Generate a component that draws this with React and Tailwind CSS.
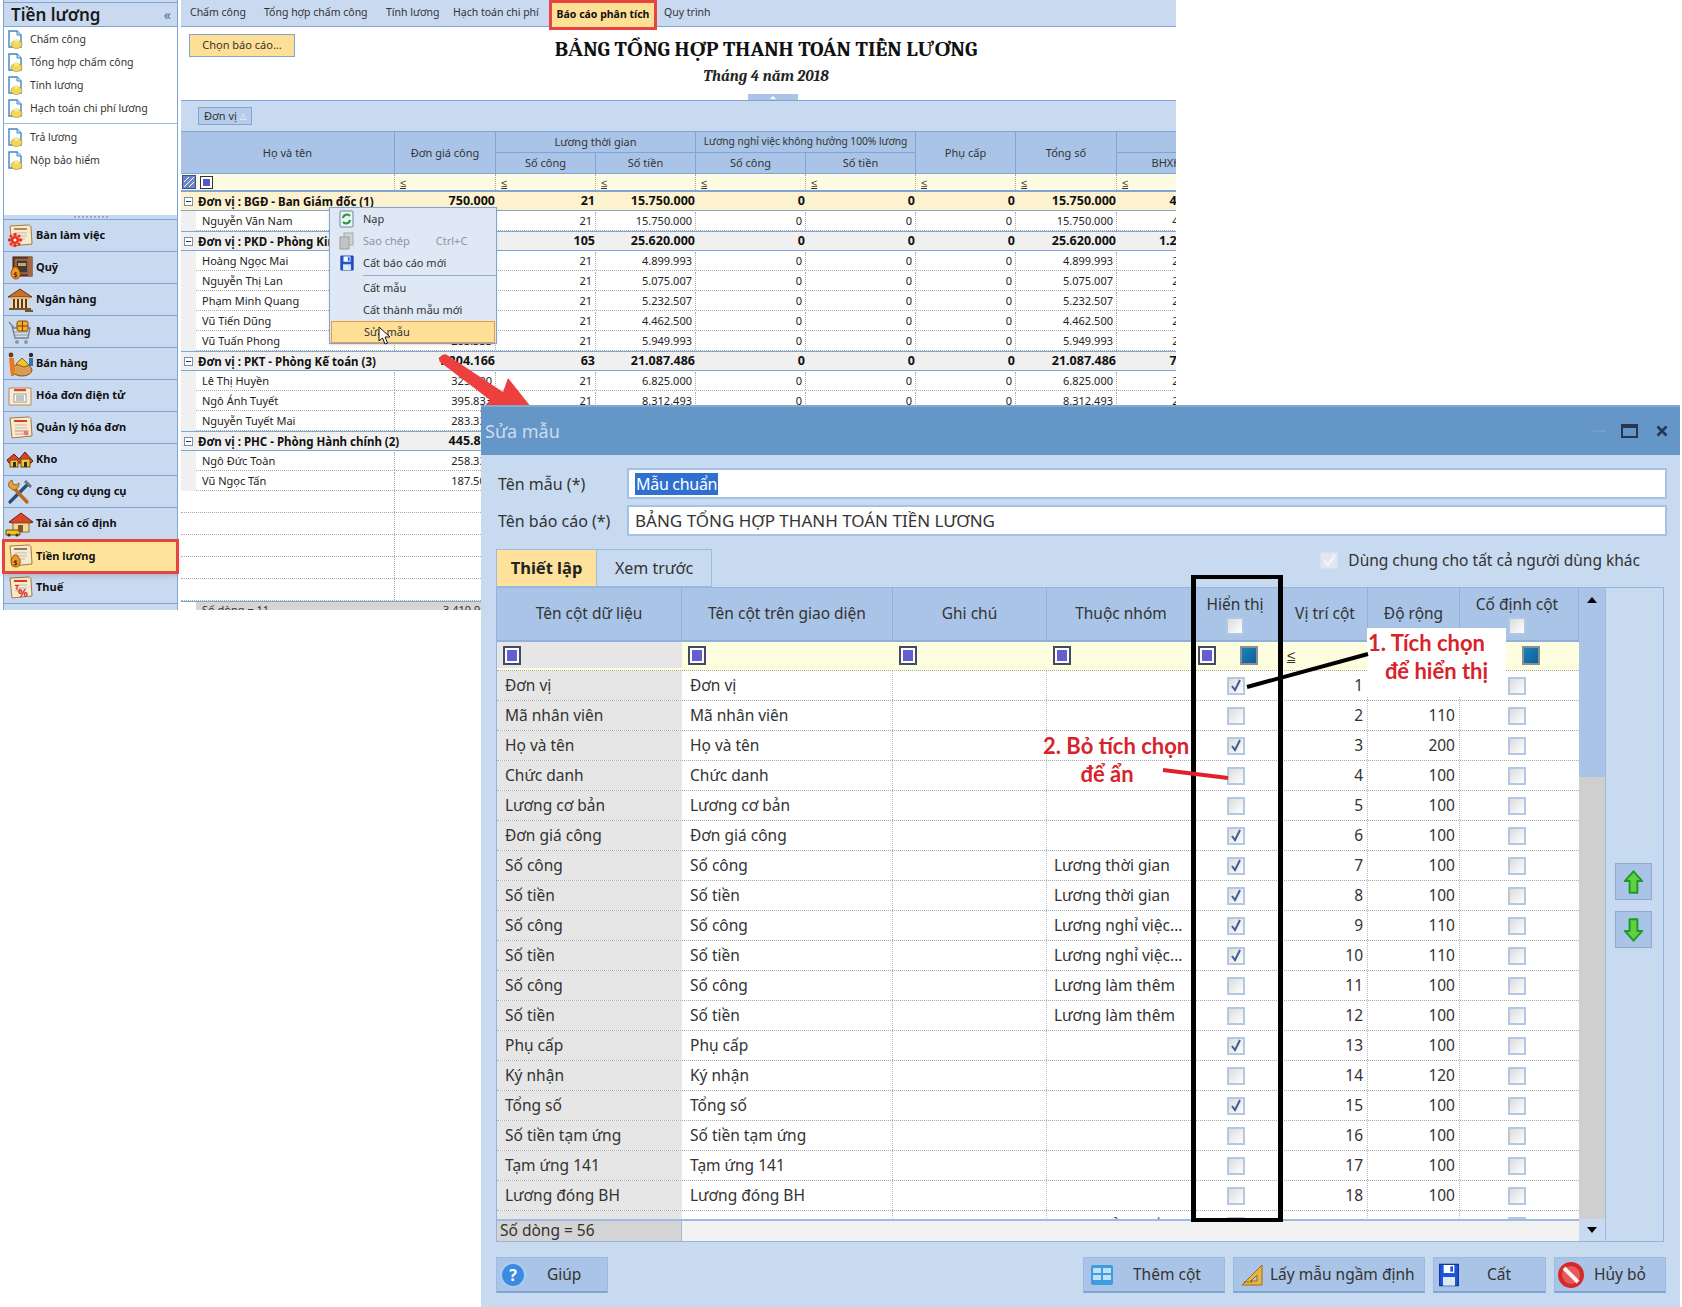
import React from "react";

const Doc = () => (
  <svg width="18" height="20" viewBox="0 0 18 20" className="shrink-0">
    <path d="M2 1h8l4 4v12H2z" fill="#fff" stroke="#3f86c8" strokeWidth="1.4" />
    <path d="M10 1v4h4" fill="#cfe3f5" stroke="#3f86c8" />
    <ellipse cx="9.5" cy="14.5" rx="5.500" ry="4" fill="#f2d75c" stroke="#b89a2a" strokeWidth="0.7" />
    <ellipse cx="9.5" cy="11" rx="2.600" ry="2" fill="#f8e88e" />
  </svg>
);

const Paper = ({ children, head = "#b9884a" }) => (
  <svg width="28" height="26" viewBox="0 0 28 26" className="shrink-0">
    <path d="M4 3l18-1c2 0 3 1 3 2l1 17-20 2z" fill="#f6ead0" stroke="#a8793f" />
    <rect x="8" y="5" width="13" height="2" fill={head} />
    <path d="M9 10h12M9 13h12M9 16h10" stroke="#c4b9a4" />
    {children}
  </svg>
);

const Bag = () => (
  <g>
    <path d="M6 15l2-3h3l2 3c2 2 2 9-3 9s-6-7-4-9z" fill="#ef9a1f" stroke="#7a3d08" strokeWidth="0.8" />
    <text x="9.5" y="22" fontSize="7" fontWeight="700" textAnchor="middle" fill="#5b2b05">$</text>
  </g>
);

const icons = {
  desk: (
    <Paper>
      <g fill="#e8321f">
        <circle cx="9" cy="17" r="4" />
        <circle cx="9" cy="11.5" r="1.8" /><circle cx="9" cy="22.5" r="1.8" />
        <circle cx="3.5" cy="17" r="1.8" /><circle cx="14.5" cy="17" r="1.8" />
        <circle cx="5" cy="13" r="1.6" /><circle cx="13" cy="13" r="1.6" />
        <circle cx="5" cy="21" r="1.6" /><circle cx="13" cy="21" r="1.6" />
      </g>
      <circle cx="9" cy="17" r="1.6" fill="#fff" />
    </Paper>
  ),
  safe: (
    <svg width="28" height="26" viewBox="0 0 28 26" className="shrink-0">
      <rect x="7" y="2" width="19" height="19" fill="#7a3f24" stroke="#3f1d0d" />
      <rect x="10" y="5" width="12" height="13" fill="#3e3a36" stroke="#b98a63" />
      <rect x="12" y="8" width="8" height="3" fill="#c9a46b" />
      <path d="M22 2l4 0v19h-4z" fill="#a8653d" />
      <Bag />
    </svg>
  ),
  bank: (
    <svg width="28" height="26" viewBox="0 0 28 26" className="shrink-0">
      <path d="M2 10L14 2l12 8z" fill="#c4712d" stroke="#6e3a12" />
      <rect x="5" y="10" width="18" height="2" fill="#e2b27a" />
      <rect x="5" y="12" width="18" height="9" fill="#f0d7ac" />
      <path d="M8 12v9M12 12v9M16 12v9M20 12v9" stroke="#5f3b17" strokeWidth="2" />
      <path d="M3 22h22M19 24h8" stroke="#7a5428" strokeWidth="2" />
    </svg>
  ),
  cart: (
    <svg width="28" height="28" viewBox="0 0 28 28" className="shrink-0">
      <path d="M3 4l5 6h16l-2 10H9L6 8" fill="#d8dde4" stroke="#75808d" strokeWidth="1.3" />
      <path d="M8 14h15M9 17h13" stroke="#8d97a3" />
      <rect x="11" y="3" width="11" height="10" rx="2" fill="#f0b429" stroke="#7a5310" />
      <path d="M16.500 3v10M11 8h11" stroke="#8f2c1c" />
      <circle cx="11" cy="24" r="2" fill="#8d97a3" /><circle cx="20" cy="24" r="2" fill="#8d97a3" />
    </svg>
  ),
  sell: (
    <svg width="28" height="28" viewBox="0 0 28 28" className="shrink-0">
      <ellipse cx="16" cy="20" rx="10" ry="6" fill="#d99c57" stroke="#80521c" />
      <path d="M10 14l6-6 7 7-5 2z" fill="#f1c131" stroke="#8a6a0f" />
      <circle cx="5" cy="5" r="2.400" fill="#6a3c1a" /><path d="M3 8h5l1 11-1 7H5l-1-7z" fill="#ea7a1f" />
      <circle cx="25" cy="5" r="2.200" fill="#2d2d2d" /><path d="M23 8h4v8h-4z" fill="#3a6fa8" />
    </svg>
  ),
  invoice: (
    <svg width="28" height="26" viewBox="0 0 28 26" className="shrink-0">
      <path d="M3 5h22v17H3z" fill="#f7ecd6" stroke="#b88a58" />
      <rect x="8" y="6" width="12" height="2.200" fill="#d8452e" />
      <rect x="8" y="11" width="12" height="8" fill="#fff" stroke="#9c9c9c" />
      <path d="M10 13h8M10 15h8M10 17h8" stroke="#888" />
    </svg>
  ),
  manage: (
    <Paper head="#e03a22">
      <path d="M9 19h14M9 16h14" stroke="#d8a0a0" />
      <circle cx="20" cy="18" r="2.400" fill="#e87b6e" />
    </Paper>
  ),
  store: (
    <svg width="28" height="22" viewBox="0 0 28 22" className="shrink-0">
      <path d="M1 11l7-6 5 5 6-7 8 9-2 2H3z" fill="#d9442a" stroke="#6b1c0c" />
      <rect x="4" y="11" width="8" height="7" fill="#f4c33a" stroke="#6b4c0c" />
      <rect x="15" y="10" width="9" height="8" fill="#f4c33a" stroke="#6b4c0c" />
      <rect x="7" y="13" width="3" height="5" fill="#3a2a10" /><rect x="18" y="13" width="3" height="5" fill="#3a2a10" />
    </svg>
  ),
  tools: (
    <svg width="28" height="28" viewBox="0 0 28 28" className="shrink-0">
      <path d="M4 24L21 7" stroke="#2a4d7a" strokeWidth="3.200" strokeLinecap="round" />
      <path d="M19 3l6 6" stroke="#6b7480" strokeWidth="3" />
      <path d="M5 7l16 17" stroke="#b96a1e" strokeWidth="3.400" strokeLinecap="round" />
      <path d="M3 9a5 5 0 0 1 3-7l1 4 3 1 3-2a6 6 0 0 1-6 7z" fill="#e6a23a" stroke="#6e4a10" strokeWidth="0.7" />
    </svg>
  ),
  asset: (
    <svg width="30" height="26" viewBox="0 0 30 26" className="shrink-0">
      <path d="M4 11L16 2l12 9-3 1H7z" fill="#d9442a" stroke="#7a1c0c" />
      <rect x="8" y="12" width="16" height="9" fill="#f2d9a0" stroke="#8a6a2a" />
      <rect x="13" y="14" width="5" height="7" fill="#8a5222" />
      <path d="M1 19h12l2 3v2H1z" fill="#f2c31c" stroke="#6a540c" />
      <circle cx="4" cy="24" r="1.600" fill="#333" /><circle cx="12" cy="24" r="1.600" fill="#333" />
    </svg>
  ),
  salary: <Paper head="#8a7a6a"><Bag /></Paper>,
  tax: (
    <Paper head="#e03a22">
      <text x="17" y="22" fontSize="11" fontWeight="700" fill="#d8281e" textAnchor="middle">%</text>
      <text x="9" y="15" fontSize="7" fontWeight="700" fill="#d8281e">T</text>
    </Paper>
  ),
};

const Floppy = ({ s = 16 }) => (
  <svg width={s} height={s + 2} viewBox="0 0 16 18" className="shrink-0">
    <path d="M1 1h14v16H1z" fill="#1f55d8" stroke="#143a9a" />
    <rect x="4" y="1.500" width="8" height="6" fill="#fff" />
    <rect x="9" y="2.500" width="2" height="4" fill="#1f55d8" />
    <rect x="3.500" y="10.500" width="9" height="6.500" fill="#dfe8f7" />
  </svg>
);

const accordion = [
  ["Bàn làm việc", "desk"], ["Quỹ", "safe"], ["Ngân hàng", "bank"], ["Mua hàng", "cart"],
  ["Bán hàng", "sell"], ["Hóa đơn điện tử", "invoice"], ["Quản lý hóa đơn", "manage"], ["Kho", "store"],
  ["Công cụ dụng cụ", "tools"], ["Tài sản cố định", "asset"], ["Tiền lương", "salary", true], ["Thuế", "tax"],
];

function Sidebar() {
  return (
    <aside className="w-[175px] ml-[3px] mr-[3px] shrink-0 flex flex-col bg-[#c9daf0] border-x border-[#7fa5d5]">
      <div className="h-[25px] mt-[2px] flex items-center justify-between pl-[7px] pr-[6px] border-y border-[#7fa5d5]">
        <span className="text-[17px] leading-none font-semibold text-[#1a1a1a]">Tiền lương</span>
        <span className="text-[14px] leading-none text-[#4b6f9e]">«</span>
      </div>
      <div className="h-[188px] bg-white flex flex-col pt-px">
        {["Chấm công", "Tổng hợp chấm công", "Tính lương", "Hạch toán chi phí lương"].map((t) => (
          <div key={t} className="h-[23px] flex items-center gap-[5px] pl-[3px] text-[10.5px] text-[#333] whitespace-nowrap"><Doc />{t}</div>
        ))}
        <div className="h-px bg-[#9cbce0] mt-[3px] mb-[2px]" />
        {["Trả lương", "Nộp bảo hiểm"].map((t) => (
          <div key={t} className="h-[23px] flex items-center gap-[5px] pl-[3px] text-[10.5px] text-[#333]"><Doc />{t}</div>
        ))}
      </div>
      <div className="h-[5px] flex items-center justify-center border-b border-[#7fa5d5]">
        <div className="w-[34px] border-t-2 border-dotted border-[#9aa9bd]" />
      </div>
      {accordion.map(([t, ic, active]) => (
        <div key={t} className={active
          ? "h-[35px] -my-[1.5px] -mx-[2px] relative z-10 flex items-center gap-[2px] pl-[1px] bg-[#fee39b] border-[3px] border-[#e8443f] shadow-md text-[11px] font-bold text-[#111]"
          : "h-[32px] shrink-0 flex items-center gap-[2px] pl-[2px] border-b border-[#7fa5d5] text-[11px] font-bold text-[#111]"}>
          <span className="w-[28px] flex justify-center">{icons[ic]}</span>
          {t}
        </div>
      ))}
    </aside>
  );
}

const tabs = [["Chấm công", "w-[74px]"], ["Tổng hợp chấm công", "w-[122px]"], ["Tính lương", "w-[67px]"], ["Hạch toán chi phí", "w-[105px]"]];
const cols = "grid grid-cols-[214px_101px_100px_100px_110px_110px_100px_101px_100px]";
const cell = "border-r border-[#7fa5d5] flex items-center justify-center";

function Table() {
  const data = [
    { g: "Đơn vị : BGĐ - Ban Giám đốc (1)", v: ["750.000", "21", "15.750.000", "0", "0", "0", "15.750.000", "472.500"], hot: true },
    { n: "Nguyễn Văn Nam", v: ["750.000", "21", "15.750.000", "0", "0", "0", "15.750.000", "472.500"] },
    { g: "Đơn vị : PKD - Phòng Kinh doanh (5)", v: ["1.220.000", "105", "25.620.000", "0", "0", "0", "25.620.000", "1.230.000"] },
    { n: "Hoàng Ngọc Mai", v: ["233.333", "21", "4.899.993", "0", "0", "0", "4.899.993", "220.500"] },
    { n: "Nguyễn Thị Lan", v: ["241.667", "21", "5.075.007", "0", "0", "0", "5.075.007", "228.375"] },
    { n: "Phạm Minh Quang", v: ["249.167", "21", "5.232.507", "0", "0", "0", "5.232.507", "235.463"] },
    { n: "Vũ Tiến Dũng", v: ["212.500", "21", "4.462.500", "0", "0", "0", "4.462.500", "200.813"] },
    { n: "Vũ Tuấn Phong", v: ["283.333", "21", "5.949.993", "0", "0", "0", "5.949.993", "267.750"] },
    { g: "Đơn vị : PKT - Phòng Kế toán (3)", v: ["1.204.166", "63", "21.087.486", "0", "0", "0", "21.087.486", "742.500"] },
    { n: "Lê Thị Huyền", v: ["325.000", "21", "6.825.000", "0", "0", "0", "6.825.000", "270.000"] },
    { n: "Ngô Ánh Tuyết", v: ["395.833", "21", "8.312.493", "0", "0", "0", "8.312.493", "270.000"] },
    { n: "Nguyễn Tuyết Mai", v: ["283.333", "21", "5.949.993", "0", "0", "0", "5.949.993", "202.500"] },
    { g: "Đơn vị : PHC - Phòng Hành chính (2)", v: ["445.833", "42", "9.362.493", "0", "0", "0", "9.362.493", "420.000"] },
    { n: "Ngô Đức Toàn", v: ["258.333", "21", "5.424.993", "0", "0", "0", "5.424.993", "240.000"] },
    { n: "Vũ Ngọc Tấn", v: ["187.500", "21", "3.937.500", "0", "0", "0", "3.937.500", "180.000"] },
  ];
  return (
    <div className="w-[995px] overflow-hidden">
      <div className={`${cols} h-[43px] bg-[#a9c4e6] border-y border-[#7fa5d5] text-[11px] text-[#333] grid-rows-[21px_21px] w-max`}>
        <div className={`${cell} row-span-2`}>Họ và tên</div>
        <div className={`${cell} row-span-2`}>Đơn giá công</div>
        <div className={`${cell} col-span-2 border-b`}>Lương thời gian</div>
        <div className={`${cell} col-span-2 border-b whitespace-nowrap text-[10.2px]`}>Lương nghỉ việc không hưởng 100% lương</div>
        <div className={`${cell} row-span-2`}>Phụ cấp</div>
        <div className={`${cell} row-span-2`}>Tổng số</div>
        <div className={`${cell} border-b`} />
        <div className={cell}>Số công</div>
        <div className={cell}>Số tiền</div>
        <div className={cell}>Số công</div>
        <div className={cell}>Số tiền</div>
        <div className={cell}>BHXH</div>
      </div>
      <div className={`${cols} h-[17px] bg-[#fdfce2] border-b border-[#7fa5d5] text-[11px] text-[#333] w-max`}>
        <div className="flex items-center gap-[4px] pl-px border-r border-dotted border-[#aaa]">
          <svg width="14" height="14" viewBox="0 0 14 14"><rect x="0.5" y="0.5" width="13" height="13" fill="#6c86c9" stroke="#3b4f8f" /><path d="M2 12L12 2M2 7l5-5M7 12l5-5" stroke="#fff" /></svg>
          <span className="w-[13px] h-[13px] border border-[#333] bg-white flex items-center justify-center"><span className="w-[7px] h-[7px] bg-[#5a55c9]" /></span>
        </div>
        {[0, 1, 2, 3, 4, 5, 6, 7].map((i) => (
          <div key={i} className="pl-[5px] border-r border-dotted border-[#aaa] flex items-center"><span className="underline leading-none">≤</span></div>
        ))}
      </div>
      {data.map((r, i) => r.g ? (
        <div key={i} className={`${cols} h-[20px] w-max border-y border-[#7fa5d5] text-[11.5px] font-bold text-[#111] items-center ${r.hot ? "bg-[#fdf2cf]" : "bg-[#f0f0f0]"}`}>
          <div className="flex items-center whitespace-nowrap pl-[3px]">
            <span className="w-[9px] h-[9px] border border-[#7890b0] bg-white mr-[5px] shrink-0 flex items-center justify-center"><span className="w-[5px] h-px bg-[#333]" /></span>
            {r.g}
          </div>
          {r.v.map((x, j) => <div key={j} className="text-right pr-[1px] text-[12.5px]">{x}</div>)}
        </div>
      ) : (
        <div key={i} className={`${cols} h-[20px] w-max pt-px border-b border-dotted border-[#aaa] text-[11px] text-[#222] items-stretch`}>
          <div className="flex items-center pl-[21px] border-r border-dotted border-[#aaa] relative whitespace-nowrap">
            <span className="absolute left-0 -top-px -bottom-px w-[15px] bg-[#f0f0f0]" />
            {r.n}
          </div>
          {r.v.map((x, j) => <div key={j} className="flex items-center justify-end pr-[3px] border-r border-dotted border-[#aaa]">{x}</div>)}
        </div>
      ))}
      {[0, 1, 2, 3, 4].map((i) => (
        <div key={i} className={`${cols} h-[22px] w-max border-b border-dotted border-[#aaa]`}>
          <div className="border-r border-dotted border-[#aaa]" />
          <div className="border-r border-dotted border-[#aaa]" />
        </div>
      ))}
      <div className={`${cols} h-[20px] w-max text-[11px] text-[#333] border-t border-[#7fa5d5]`}>
        <div className="ml-[15px] pl-[6px] bg-[#d5d5d5]">Số dòng = 11</div>
        <div className="text-right pr-[3px] bg-[#d5d5d5]">3.419.999</div>
      </div>
    </div>
  );
}

function Menu() {
  const Row = ({ icon, children, right, dim, hot }) => (
    <div className={hot
      ? "h-[22px] mx-px flex items-center bg-[#fedf96] border border-[#e89a3c] pl-[32px] text-[11px] text-[#333]"
      : `h-[22px] flex items-center text-[11px] ${dim ? "text-[#8d96a3]" : "text-[#333]"}`}>
      {!hot && <span className="w-[33px] flex justify-center">{icon}</span>}
      <span>{children}</span>
      {right && <span className="ml-[26px]">{right}</span>}
    </div>
  );
  return (
    <div className="absolute left-[148px] top-[207px] w-[168px] h-[137px] bg-[#dfe8f5] border border-[#7fa5d5] shadow-sm">
      <Row icon={
        <svg width="15" height="18" viewBox="0 0 15 18"><rect x="1" y="1" width="13" height="16" rx="1" fill="#eef3f9" stroke="#6d86a8" /><path d="M4 8a4 4 0 0 1 7-2" fill="none" stroke="#1f9d2e" strokeWidth="2" /><path d="M11 10a4 4 0 0 1-7 2" fill="none" stroke="#1f9d2e" strokeWidth="2" /></svg>
      }>Nạp</Row>
      <Row dim right="Ctrl+C" icon={
        <svg width="15" height="18" viewBox="0 0 15 18"><rect x="5" y="1" width="9" height="12" fill="#d2d2d2" stroke="#a8a8a8" /><rect x="1" y="5" width="9" height="12" fill="#c4c4c4" stroke="#a0a0a0" /></svg>
      }>Sao chép</Row>
      <Row icon={<Floppy s={14} />}>Cất báo cáo mới</Row>
      <div className="h-px ml-[33px] bg-[#9aaac0] my-px" />
      <Row>Cất mẫu</Row>
      <Row>Cất thành mẫu mới</Row>
      <Row hot>Sửa mẫu</Row>
      <svg width="14" height="19" viewBox="0 0 14 19" className="absolute left-[48px] top-[118px]">
        <path d="M1 1v14l3.500-3 2.500 6 2.500-1-2.500-6h5z" fill="#fff" stroke="#111" />
      </svg>
    </div>
  );
}

function Main() {
  return (
    <main className="w-[995px] flex flex-col overflow-hidden relative">
      <div className="h-[27px] shrink-0 bg-[#c9daf0] border-b border-[#7fa5d5] flex items-center text-[10.5px] text-[#333]">
        {tabs.map(([t, w]) => <div key={t} className={`${w} pl-[9px] whitespace-nowrap`}>{t}</div>)}
        <div className="w-[108px] h-[30px] mb-[-3px] z-10 flex items-center justify-center whitespace-nowrap bg-[#fedf96] border-[3px] border-[#e8443f] font-bold text-[#111]">Báo cáo phân tích</div>
        <div className="pl-[7px]">Quy trình</div>
      </div>
      <div className="h-[73px] shrink-0 relative flex flex-col items-center pl-[175px]">
        <div className="mt-[10px] font-serif font-bold text-[21px] leading-[25px] text-[#111] whitespace-nowrap">BẢNG TỔNG HỢP THANH TOÁN TIỀN LƯƠNG</div>
        <div className="mt-[5px] font-serif font-bold italic text-[15.5px] leading-[18px] text-[#222]">Tháng 4 năm 2018</div>
        <div className="absolute left-[8px] top-[7px] w-[106px] h-[23px] bg-[#fedf96] border border-[#7fa5d5] flex items-center justify-center text-[11px] text-[#333]">Chọn báo cáo...</div>
        <div className="absolute left-[567px] bottom-0 w-[50px] h-[6px] bg-[#a9c4e6] flex items-center justify-center"><span className="w-0 h-0 border-x-[3px] border-x-transparent border-b-[3px] border-b-white" /></div>
      </div>
      <div className="h-[31px] shrink-0 bg-[#c9daf0] border-t border-[#7fa5d5] flex items-center pl-[17px]">
        <div className="h-[18px] w-[54px] bg-[#b5cceb] border border-[#7fa5d5] flex items-center justify-center gap-[3px] text-[11px] text-[#333]">Đơn vị <span className="text-[8px] text-white leading-none">△</span></div>
      </div>
      <Table />
      <Menu />
    </main>
  );
}

const gridCols = "grid grid-cols-[185px_211px_154px_149px_87px_85px_92px_119px]";

const Check = ({ on }) => (
  <span className="w-[18px] h-[18px] border-2 border-[#b3c8e2] bg-gradient-to-br from-[#dcdcdc] to-white flex items-center justify-center shrink-0">
    {on && <svg width="12" height="13" viewBox="0 0 12 13"><path d="M2 7l3 4 5-10" fill="none" stroke="#3f5f96" strokeWidth="2" /></svg>}
  </span>
);
const Purple = () => (
  <span className="w-[18px] h-[19px] border-2 border-[#444a63] bg-white flex items-center justify-center"><span className="w-[10px] h-[11px] bg-[#635fd1]" /></span>
);
const Blue = () => (
  <span className="w-[18px] h-[19px] border-2 border-[#8a8f93] bg-gradient-to-br from-[#1b82b8] to-[#0e5f99]" />
);

const rows = [
  ["Đơn vị", "", 1, "", 1], ["Mã nhân viên", "", 0, "110", 2], ["Họ và tên", "", 1, "200", 3], ["Chức danh", "", 0, "100", 4],
  ["Lương cơ bản", "", 0, "100", 5], ["Đơn giá công", "", 1, "100", 6], ["Số công", "Lương thời gian", 1, "100", 7],
  ["Số tiền", "Lương thời gian", 1, "100", 8], ["Số công", "Lương nghỉ việc...", 1, "110", 9], ["Số tiền", "Lương nghỉ việc...", 1, "110", 10],
  ["Số công", "Lương làm thêm", 0, "100", 11], ["Số tiền", "Lương làm thêm", 0, "100", 12], ["Phụ cấp", "", 1, "100", 13],
  ["Ký nhận", "", 0, "120", 14], ["Tổng số", "", 1, "100", 15], ["Số tiền tạm ứng", "", 0, "100", 16], ["Tạm ứng 141", "", 0, "100", 17],
  ["Lương đóng BH", "", 0, "100", 18], ["", "Các khoản khấu trừ", 0, "100", 19],
];

const DBtn = ({ w, icon, children }) => (
  <div className={`${w} h-[36px] bg-[#a9c4e6] border border-[#9dbbe0] border-b-2 border-b-[#7fa5d5] flex items-center text-[15.5px] text-[#333] whitespace-nowrap`}>
    {icon}{children}
  </div>
);

function Dialog() {
  const hdr = "border-r border-[#8eb0da] flex items-center justify-center";
  return (
    <section className="absolute left-[481px] top-[405px] w-[1199px] h-[902px] bg-[#c8daf0] flex flex-col text-[#333]">
      <div className="h-[50px] shrink-0 bg-[#6496c8] flex items-center justify-between pl-[4px] pr-[12px] border-t-2 border-[#82a9d2]">
        <span className="text-[18px] text-[#cddcee]">Sửa mẫu</span>
        <div className="flex items-center gap-[15px]">
          <span className="w-[13px] h-[2px] bg-[#7f9dbf]" />
          <span className="w-[17px] h-[14px] border-2 border-t-4 border-[#26374f]" />
          <svg width="12" height="12" viewBox="0 0 12 12" className="ml-[3px]"><path d="M1.500 1.500l9 9M10.500 1.500l-9 9" stroke="#26374f" strokeWidth="2.600" /></svg>
        </div>
      </div>
      <div className="flex flex-col pl-[15px] pr-[13px] pt-[13px] flex-1">
        <div className="flex items-center h-[31px] text-[16px]">
          <span className="w-[131px] pl-[2px]">Tên mẫu (*)</span>
          <div className="flex-1 h-full bg-white border-2 border-[#a5c1e3] flex items-center pl-[6px] text-[16px] tracking-[-0.3px]">
            <span className="bg-[#2f6fd0] text-white leading-[22px] px-px">Mẫu chuẩn</span>
          </div>
        </div>
        <div className="flex items-center h-[31px] mt-[6px] text-[16px]">
          <span className="w-[131px] pl-[2px]">Tên báo cáo (*)</span>
          <div className="flex-1 h-full bg-white border-2 border-[#a5c1e3] flex items-center pl-[6px] text-[17px] whitespace-nowrap">BẢNG TỔNG HỢP THANH TOÁN TIỀN LƯƠNG</div>
        </div>
        <div className="flex items-end h-[38px] mt-[13px] relative">
          <div className="w-[101px] h-[38px] bg-[#fee29b] border border-[#9dbbe0] flex items-center justify-center text-[16.5px] font-bold text-[#222]">Thiết lập</div>
          <div className="w-[115px] h-[38px] bg-[#c8daf0] border border-l-0 border-[#9dbbe0] flex items-center justify-center text-[16px]">Xem trước</div>
          <div className="ml-auto mr-[27px] mb-[15px] flex items-center gap-[10px] text-[15.5px]">
            <span className="w-[18px] h-[17px] bg-[#dfe7f0] border border-[#d5dee9] flex items-center justify-center">
              <svg width="13" height="12" viewBox="0 0 13 12"><path d="M1 6l4 5 7-10" fill="none" stroke="#f5f7fa" strokeWidth="2" /></svg>
            </span>
            Dùng chung cho tất cả người dùng khác
          </div>
        </div>
        <div className="w-[1168px] h-[655px] border border-[#93b4dc] flex">
          <div className="w-[1082px] flex flex-col">
            <div className={`${gridCols} h-[54px] shrink-0 bg-[#a9c4e6] text-[15.5px] border-b-2 border-[#8eb0da]`}>
              <div className={hdr}>Tên cột dữ liệu</div>
              <div className={hdr}>Tên cột trên giao diện</div>
              <div className={hdr}>Ghi chú</div>
              <div className={hdr}>Thuộc nhóm</div>
              <div className={`${hdr} flex-col gap-[3px] pr-[8px]`}><span className="leading-[20px]">Hiển thị</span><Check /></div>
              <div className={hdr}>Vị trí cột</div>
              <div className={hdr}>Độ rộng</div>
              <div className={`${hdr} flex-col gap-[3px] pr-[4px]`}><span className="leading-[20px]">Cố định cột</span><Check /></div>
            </div>
            <div className={`${gridCols} h-[29px] pb-[2px] shrink-0 bg-[#fdfde0] border-b border-dotted border-[#aaa]`}>
              <div className="bg-[#e6e6e6] pl-[6px] flex items-center"><Purple /></div>
              {[0, 1, 2].map((i) => <div key={i} className="pl-[6px] flex items-center"><Purple /></div>)}
              <div className="pl-[2px] flex items-center gap-[24px]"><Purple /><Blue /></div>
              <div className="pl-[4px] flex items-center"><span className="underline text-[15px] leading-none">≤</span></div>
              <div />
              <div className="flex items-center justify-center pl-[22px]"><Blue /></div>
            </div>
            <div className="h-[550px] overflow-hidden bg-white">
              {rows.map(([a, g, on, w, p], i) => (
                <div key={i} className={`${gridCols} h-[30px] border-b border-dotted border-[#aaa] text-[15.5px]`}>
                  <div className="bg-[#e6e6e6] pl-[8px] flex items-center">{a}</div>
                  <div className="pl-[8px] flex items-center border-r border-dotted border-[#bbb]">{a}</div>
                  <div className="border-r border-dotted border-[#bbb]" />
                  <div className="pl-[7px] flex items-center border-r border-dotted border-[#bbb] whitespace-nowrap">{g}</div>
                  <div className="flex items-center justify-center pr-[8px]"><Check on={!!on} /></div>
                  <div className="flex items-center justify-end pr-[4px] border-r border-dotted border-[#bbb]">{p}</div>
                  <div className="flex items-center justify-end pr-[4px] border-r border-dotted border-[#bbb]">{w}</div>
                  <div className="flex items-center justify-center pr-[5px]"><Check /></div>
                </div>
              ))}
            </div>
            <div className="h-[22px] shrink-0 flex bg-[#f2f2f2] border-t-2 border-[#9dbbe0]">
              <div className="w-[185px] bg-[#d4d4d4] pl-[3px] flex items-center text-[15.5px] border-r border-[#9dbbe0]">Số dòng = 56</div>
            </div>
          </div>
          <div className="w-[26px] flex flex-col bg-[#cfcfcf]">
            <div className="h-[189px] bg-[#a9c4e6] flex justify-center pt-[9px]">
              <span className="w-0 h-0 border-x-[5px] border-x-transparent border-b-[6px] border-b-black" />
            </div>
            <div className="flex-1" />
            <div className="h-[22px] bg-[#c8daf0] flex justify-center items-center">
              <span className="w-0 h-0 border-x-[5px] border-x-transparent border-t-[6px] border-t-black" />
            </div>
          </div>
          <div className="flex-1 border-l border-[#9dbbe0] bg-[#c8daf0] flex flex-col items-center gap-[11px] pt-[275px] pr-[3px]">
            {["M9 13L18 3l9 10h-5v12h-8V13z", "M14 3h8v12h5L18 25 9 15h5z"].map((d) => (
              <div key={d} className="w-[37px] h-[37px] bg-[#a9c4e6] border border-[#8eaad0] flex items-center justify-center">
                <svg width="36" height="28" viewBox="0 0 36 28"><path d={d} fill="#5fd142" stroke="#1e9a24" strokeWidth="2" strokeLinejoin="round" /></svg>
              </div>
            ))}
          </div>
        </div>
        <div className="flex mt-[15px] gap-[8px] w-[1170px]">
          <DBtn w="w-[112px] mr-auto" icon={<span className="w-[26px] h-[26px] mx-[3px] rounded-full bg-[#3d8be0] border-2 border-[#a8cdf2] text-white text-[16px] font-bold flex items-center justify-center leading-none">?</span>}><span className="pl-[18px]">Giúp</span></DBtn>
          <DBtn w="w-[142px]" icon={
            <svg width="24" height="24" viewBox="0 0 24 24" className="mx-[6px]"><rect x="1" y="2" width="22" height="20" rx="2" fill="#3e9ce0" /><path d="M3 5h8v5H3zM13 5h8v5h-8zM3 12h8v5H3zM13 12h8v5h-8z" fill="#bfe0f7" /></svg>
          }><span className="pl-[13px]">Thêm cột</span></DBtn>
          <DBtn w="w-[192px]" icon={
            <svg width="24" height="24" viewBox="0 0 24 24" className="mx-[6px]"><path d="M22 2v20H2z" fill="#e7b446" stroke="#9a6e12" /><path d="M17 12v6h-6z" fill="#a9c4e6" stroke="#9a6e12" /><path d="M5 20v-2M8 20v-2M11 20v-3" stroke="#6b4c0c" /></svg>
          }>Lấy mẫu ngầm định</DBtn>
          <DBtn w="w-[113px]" icon={<span className="mx-[4px]"><Floppy s={22} /></span>}><span className="pl-[23px]">Cất</span></DBtn>
          <DBtn w="w-[112px]" icon={
            <svg width="26" height="26" viewBox="0 0 26 26" className="mx-[3px]"><circle cx="13" cy="13" r="11" fill="#e85a5a" stroke="#d62a2a" strokeWidth="4" /><path d="M6 6l14 14" stroke="#f5f5f5" strokeWidth="4" /></svg>
          }><span className="pl-[7px]">Hủy bỏ</span></DBtn>
        </div>
      </div>
    </section>
  );
}

function Annotations() {
  return (
    <div className="[font-family:Lato,sans-serif] font-bold text-[#d8232a] text-[22px] leading-[28px] text-center">
      <div className="absolute left-[1191px] top-[575px] w-[92px] h-[647px] border-x-[5px] border-y-[4px] border-black" />
      <div className="absolute left-[1367px] top-[628px] w-[139px] h-[69px] bg-white flex flex-col pt-[1px] whitespace-nowrap">
        <span className="pr-[20px]">1. Tích chọn</span><span>để hiển thị</span>
      </div>
      <div className="absolute left-[1043px] top-[732px] w-[146px] whitespace-nowrap">
        <div>2. Bỏ tích chọn</div><div className="pr-[18px]">để ẩn</div>
      </div>
      <svg className="absolute left-0 top-0 pointer-events-none" width="1682" height="1307">
        <path d="M1247 687L1368 654" stroke="#000" strokeWidth="4" />
        <path d="M1163 770L1228 778" stroke="#e2202c" strokeWidth="4" />
      </svg>
    </div>
  );
}

export default function App() {
  return (
    <div className="relative w-[1682px] h-[1307px] bg-white overflow-hidden [font-family:Noto_Sans,sans-serif]">
      <div className="flex h-[610px] w-[1176px] overflow-hidden">
        <Sidebar />
        <Main />
      </div>
      <svg className="absolute left-[430px] top-[345px]" width="130" height="70" viewBox="0 0 130 70">
        <path d="M17 10L73 47l5-14 27 34H50l10-12L10 17c-3-3 3-10 7-7z" fill="#ee3f3f" />
      </svg>
      <Dialog />
      <Annotations />
    </div>
  );
}
